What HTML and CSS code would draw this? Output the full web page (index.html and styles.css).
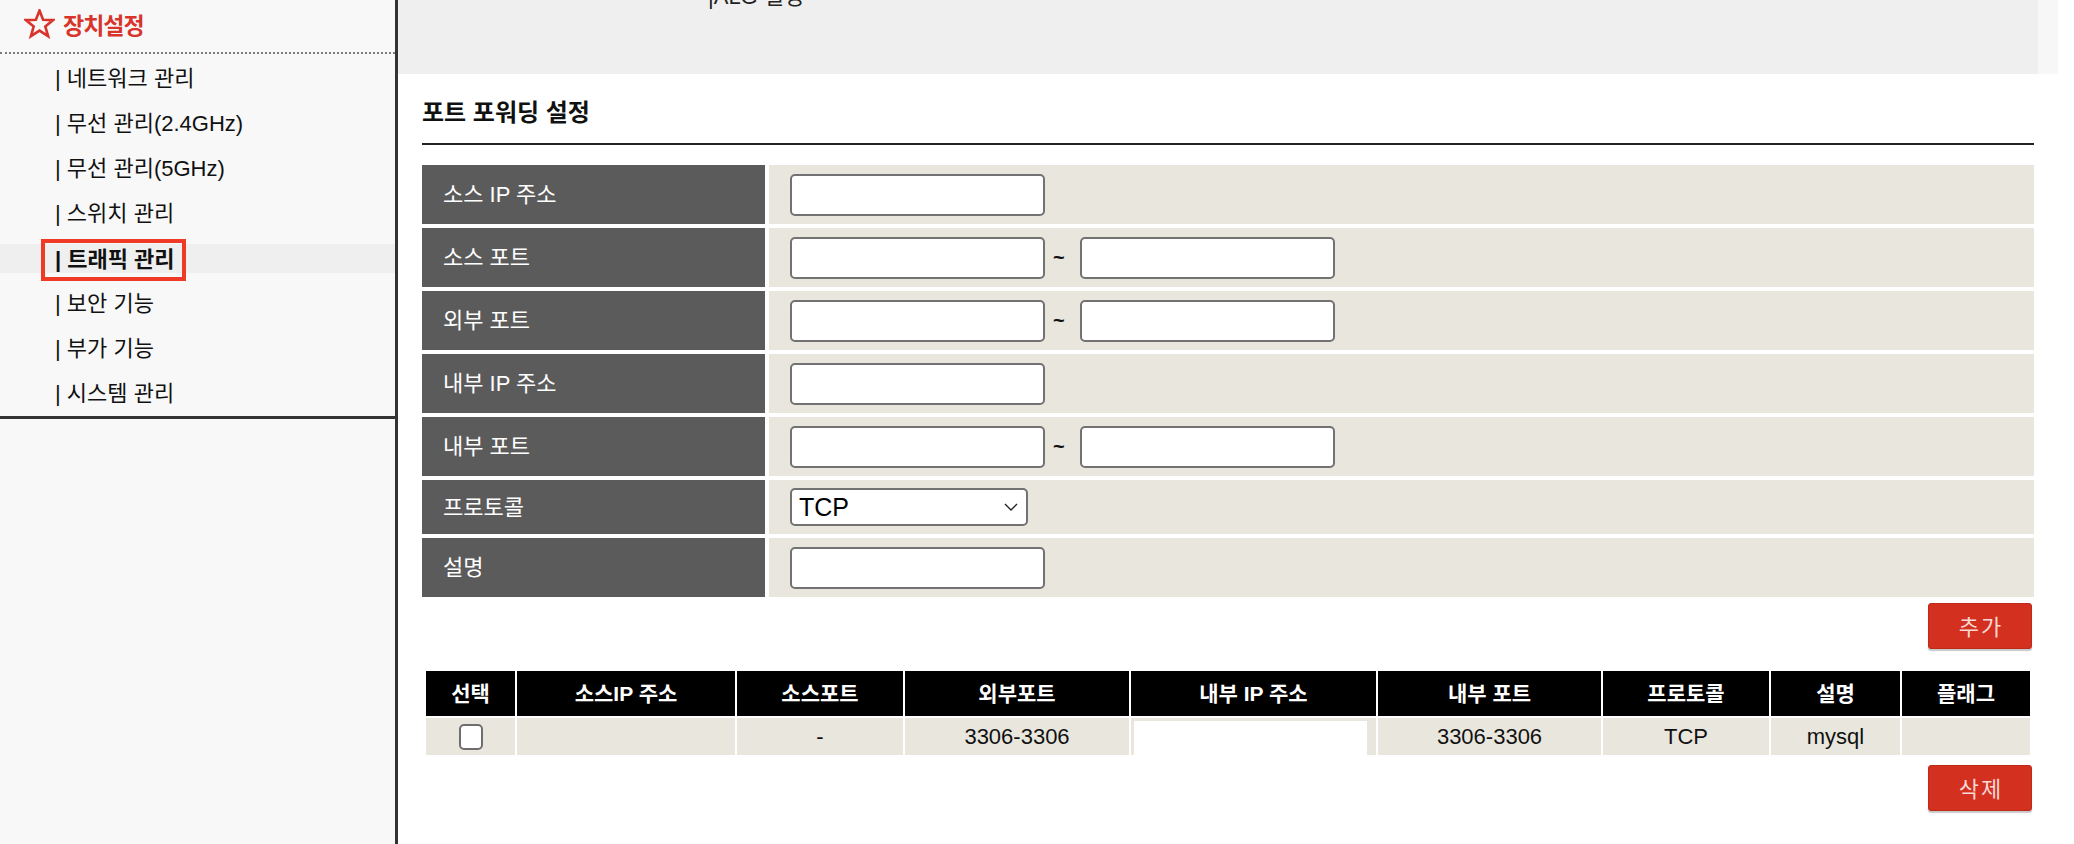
FILE: index.html
```html
<!DOCTYPE html>
<html lang="ko">
<head>
<meta charset="utf-8">
<title>포트 포워딩 설정</title>
<link rel="stylesheet" href="styles.css">
</head>
<body>
<div class="page">
  <aside class="sidebar">
    <div class="side-head">
      <svg class="star" viewBox="0 0 31 30" width="31" height="30" aria-hidden="true">
        <polygon points="15.5,1.5 19.1,10.8 29.2,11.1 21.3,17.4 24.1,27.2 15.5,21.6 6.9,27.2 9.7,17.4 1.8,11.1 11.9,10.8" fill="none" stroke="#d9342b" stroke-width="2.6" stroke-linejoin="miter"/>
      </svg>
      <span class="side-title">장치설정</span>
    </div>
    <ul class="menu">
      <li class="menu-item"><span class="menu-link">| 네트워크 관리</span></li>
      <li class="menu-item"><span class="menu-link">| 무선 관리(2.4GHz)</span></li>
      <li class="menu-item"><span class="menu-link">| 무선 관리(5GHz)</span></li>
      <li class="menu-item"><span class="menu-link">| 스위치 관리</span></li>
      <li class="menu-item active"><span class="menu-link marked">| 트래픽 관리</span></li>
      <li class="menu-item"><span class="menu-link">| 보안 기능</span></li>
      <li class="menu-item"><span class="menu-link">| 부가 기능</span></li>
      <li class="menu-item"><span class="menu-link">| 시스템 관리</span></li>
    </ul>
  </aside>

  <main class="main">
    <div class="topbar">
      <div class="topbar-fill"><span class="crumb">|ALG 설정</span></div>
      <div class="topbar-strip"></div>
    </div>

    <section class="content">
      <h2 class="section-title">포트 포워딩 설정</h2>

      <div class="form-grid">
        <div class="label">소스 IP 주소</div>
        <div class="value"><input class="text-input" type="text"></div>

        <div class="label">소스 포트</div>
        <div class="value"><input class="text-input" type="text"><span class="tilde">~</span><input class="text-input" type="text"></div>

        <div class="label">외부 포트</div>
        <div class="value"><input class="text-input" type="text"><span class="tilde">~</span><input class="text-input" type="text"></div>

        <div class="label">내부 IP 주소</div>
        <div class="value"><input class="text-input" type="text"></div>

        <div class="label">내부 포트</div>
        <div class="value"><input class="text-input" type="text"><span class="tilde">~</span><input class="text-input" type="text"></div>

        <div class="label">프로토콜</div>
        <div class="value">
          <div class="select-wrap">
            <select class="select">
              <option>TCP</option>
              <option>UDP</option>
              <option>TCP/UDP</option>
            </select>
            <svg class="chevron" viewBox="0 0 14 8" width="14" height="8" aria-hidden="true">
              <polyline points="1,1 7,7 13,1" fill="none" stroke="#222" stroke-width="1.4"/>
            </svg>
          </div>
        </div>

        <div class="label">설명</div>
        <div class="value"><input class="text-input" type="text"></div>
      </div>

      <div class="actions actions-add"><button class="btn" type="button">추가</button></div>

      <table class="list">
        <colgroup>
          <col class="c1"><col class="c2"><col class="c3"><col class="c4"><col class="c5">
          <col class="c6"><col class="c7"><col class="c8"><col class="c9">
        </colgroup>
        <thead>
          <tr>
            <th>선택</th><th>소스IP 주소</th><th>소스포트</th><th>외부포트</th><th>내부 IP 주소</th>
            <th>내부 포트</th><th>프로토콜</th><th>설명</th><th>플래그</th>
          </tr>
        </thead>
        <tbody>
          <tr>
            <td><input class="check" type="checkbox"></td>
            <td></td>
            <td>-</td>
            <td>3306-3306</td>
            <td class="cell-blank"><div class="blank"></div></td>
            <td>3306-3306</td>
            <td>TCP</td>
            <td>mysql</td>
            <td></td>
          </tr>
        </tbody>
      </table>

      <div class="actions actions-del"><button class="btn" type="button">삭제</button></div>
    </section>
  </main>
</div>
</body>
</html>
```

FILE: styles.css
```css
html, body {
  margin: 0;
  padding: 0;
}

body {
  background: #ffffff;
  color: #111111;
  font-family: "Liberation Sans", "Noto Sans CJK KR", sans-serif;
  font-size: 22px;
}

.page {
  display: flex;
  min-height: 844px;
}

/* ---------- Sidebar ---------- */
.sidebar {
  width: 395px;
  flex: 0 0 auto;
  background: #f8f8f8;
  border-right: 3px solid #333333;
}

.side-head {
  display: flex;
  align-items: center;
  padding-left: 24px;
  border-bottom: 2px dotted #7a7a7a;
  box-sizing: border-box;
  height: 54px;
}

.star {
  display: block;
  margin-bottom: 4px;
  margin-right: 8px;
}

.side-title {
  color: #d9342b;
  font-weight: bold;
  font-size: 23px;
  letter-spacing: -1px;
  line-height: 30px;
}

.menu {
  list-style: none;
  margin: 0;
  padding: 2px 0 0;
  border-bottom: 3px solid #333333;
}

.menu-item {
  height: 45px;
  line-height: 45px;
  padding-left: 55px;
  font-size: 22px;
  color: #111111;
  white-space: nowrap;
}

.menu-item.active {
  font-weight: bold;
  background: linear-gradient(to bottom, transparent 8px, #efefef 8px, #efefef 37px, transparent 37px);
}

.menu-link.marked {
  display: inline-block;
  line-height: 34px;
  vertical-align: middle;
  border: 4px solid #ef3a26;
  padding: 0 7px 0 10px;
  margin-left: -14px;
}

/* ---------- Main ---------- */
.main {
  flex: 1 1 auto;
  min-width: 0;
}

.topbar {
  display: flex;
  height: 74px;
  margin-right: 16px;
}

.topbar-fill {
  flex: 1 1 auto;
  background: #efefef;
  overflow: hidden;
}

.topbar-strip {
  width: 20px;
  background: #f7f7f7;
}

.crumb {
  display: block;
  padding-left: 310px;
  margin-top: -14px;
  line-height: 22px;
  font-size: 22px;
  color: #222222;
}

.content {
  padding: 0 40px 0 24px;
}

.section-title {
  margin: 0;
  padding: 24px 0 15px;
  font-size: 24px;
  line-height: 30px;
  font-weight: bold;
  color: #111111;
  border-bottom: 2px solid #222222;
}

/* ---------- Form ---------- */
.form-grid {
  margin-top: 20px;
  display: grid;
  grid-template-columns: 343px 1fr;
  grid-template-rows: 59px 59px 59px 59px 59px 54px 59px;
  gap: 4px;
}

.label {
  background: #5b5b5b;
  color: #ffffff;
  font-size: 22px;
  display: flex;
  align-items: center;
  padding-left: 21px;
  padding-bottom: 5px;
}

.value {
  background: #e9e7dd;
  display: flex;
  align-items: center;
  padding-left: 21px;
}

.text-input {
  width: 255px;
  height: 42px;
  box-sizing: border-box;
  border: 2px solid #727272;
  border-radius: 5px;
  background: #ffffff;
  padding: 0 6px;
  margin: 0;
  font-family: "Liberation Sans", "Noto Sans CJK KR", sans-serif;
  font-size: 20px;
}

.tilde {
  margin: 0 15px 0 8px;
  font-weight: bold;
  font-size: 20px;
  color: #111111;
}

.select-wrap {
  position: relative;
  width: 238px;
  height: 38px;
}

.select {
  -webkit-appearance: none;
  appearance: none;
  width: 100%;
  height: 100%;
  box-sizing: border-box;
  border: 2px solid #727272;
  border-radius: 5px;
  background: #ffffff;
  padding: 0 0 0 7px;
  margin: 0;
  font-family: "Liberation Sans", sans-serif;
  font-size: 25px;
  color: #000000;
}

.chevron {
  position: absolute;
  right: 10px;
  top: 15px;
  pointer-events: none;
}

/* ---------- Buttons ---------- */
.actions {
  display: flex;
  justify-content: flex-end;
  padding-right: 2px;
}

.actions-add {
  margin-top: 6px;
}

.actions-del {
  margin-top: 8px;
}

.btn {
  width: 104px;
  height: 46px;
  box-sizing: border-box;
  background: #d4301f;
  border: 1px solid #bd2a1b;
  border-radius: 3px;
  box-shadow: 0 2px 1px #c9c9c9;
  color: #f8d9d5;
  font-family: "Liberation Sans", "Noto Sans CJK KR", sans-serif;
  font-size: 22px;
  letter-spacing: 2px;
  padding: 0 0 3px 2px;
  cursor: pointer;
}

/* ---------- List table ---------- */
.list {
  margin-top: 20px;
  margin-left: 2px;
  width: 1608px;
  table-layout: fixed;
  border-collapse: separate;
  border-spacing: 2px;
}

.c1 { width: 89px; }
.c2 { width: 218px; }
.c3 { width: 166px; }
.c4 { width: 224px; }
.c5 { width: 245px; }
.c6 { width: 223px; }
.c7 { width: 166px; }
.c8 { width: 129px; }
.c9 { width: 128px; }

.list th {
  height: 45px;
  padding: 0 0 4px;
  box-sizing: border-box;
  background: #000000;
  color: #ffffff;
  font-weight: bold;
  font-size: 21px;
  text-align: center;
}

.list td {
  height: 37px;
  padding: 0;
  background: #e9e7dd;
  color: #111111;
  font-size: 22px;
  text-align: center;
}

.list td.cell-blank {
  vertical-align: top;
}

.blank {
  height: 34px;
  margin: 3px 9px 0 3px;
  background: #ffffff;
}

.check {
  -webkit-appearance: none;
  appearance: none;
  width: 24px;
  height: 26px;
  margin: 0;
  border: 2px solid #6e6e6e;
  border-radius: 5px;
  background: #ffffff;
  vertical-align: middle;
}
```
